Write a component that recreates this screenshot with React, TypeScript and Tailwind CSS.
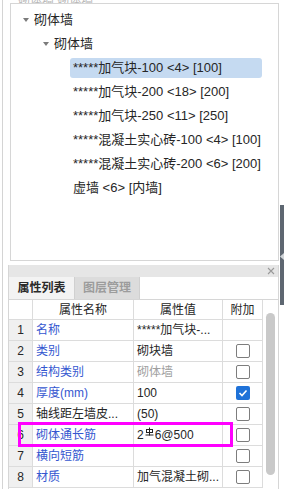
import React from "react"

const treeItems = [
  "*****加气块-100 <4> [100]",
  "*****加气块-200 <18> [200]",
  "*****加气块-250 <11> [250]",
  "*****混凝土实心砖-100 <4> [100]",
  "*****混凝土实心砖-200 <6> [200]",
  "虚墙 <6> [内墙]",
]

type Row = { name: string; value: React.ReactNode; blue?: boolean; grayValue?: boolean; box?: "none" | "off" | "on" }

const rows: Row[] = [
  { name: "名称", value: "*****加气块-...", blue: true, box: "none" },
  { name: "类别", value: "砌块墙", blue: true, box: "off" },
  { name: "结构类别", value: "砌体墙", blue: true, grayValue: true, box: "off" },
  { name: "厚度(mm)", value: "100", blue: true, box: "on" },
  { name: "轴线距左墙皮...", value: "(50)", box: "off" },
  { name: "砌体通长筋", value: <RebarValue />, blue: true, box: "off" },
  { name: "横向短筋", value: "", blue: true, box: "off" },
  { name: "材质", value: "加气混凝土砌...", blue: true, box: "off" },
]

function RebarValue() {
  return (
    <span className="inline-flex items-baseline">
      2
      <svg width="9" height="9" viewBox="0 0 9 9" className="mx-[1px] -translate-y-[3px]">
        <line x1="4.5" y1="0.5" x2="4.5" y2="8.5" stroke="#222" strokeWidth="1" />
        <rect x="1.5" y="2.5" width="6" height="3" fill="none" stroke="#222" strokeWidth="1" />
        <line x1="0.5" y1="8" x2="8.5" y2="8" stroke="#222" strokeWidth="1" />
      </svg>
      6@500
    </span>
  )
}

function Caret() {
  return (
    <svg width="6" height="4" viewBox="0 0 6 4" className="shrink-0">
      <polygon points="0,0 6,0 3,4" fill="#7b7b7b" />
    </svg>
  )
}

function Checkbox({ on }: { on?: boolean }) {
  if (on) {
    return (
      <div className="flex h-[14px] w-[14px] items-center justify-center rounded-[2px] bg-[#1f72d8]">
        <svg width="10" height="10" viewBox="0 0 10 10">
          <polyline points="1.5,5 4,7.5 8.5,2.5" fill="none" stroke="#fff" strokeWidth="1.6" />
        </svg>
      </div>
    )
  }
  return <div className="h-[14px] w-[14px] rounded-[2px] border border-[#7d7d7d] bg-white" />
}

export default function App() {
  return (
    <div
      className="relative h-[489px] w-[284px] overflow-hidden bg-white pl-[2px] text-[#262626]"
      style={{ fontFamily: '"Liberation Sans", "Noto Sans CJK SC", sans-serif' }}
    >
      <div className="flex h-full flex-col border-l border-[#d4d4d4] pl-[5px] pr-[5px]">
        {/* bottom edge of the combo above */}
        <div className="ml-[2px] h-[3px] overflow-hidden">
          <div className="-mt-[9px] pl-[8px] text-[12px] text-[#b8b8b8]">砌体墙 砌体墙</div>
        </div>

        {/* tree */}
        <div className="ml-[2px] h-[258px] border border-[#d6d6d6] pt-[4px] text-[13px]">
          <div className="flex h-6 items-center gap-[5px] pl-[12px]">
            <Caret />
            <span>砌体墙</span>
          </div>
          <div className="flex h-6 items-center gap-[5px] pl-[32px]">
            <Caret />
            <span>砌体墙</span>
          </div>
          {treeItems.map((t, i) => (
            <div key={t} className="flex h-6 items-center pl-[59px] pr-[16px]">
              <div
                className={`flex h-[20px] flex-1 items-center whitespace-pre rounded-[3px] pl-[3px] ${
                  i === 0 ? "bg-[#c5daf1]" : ""
                }`}
              >
                {t}
              </div>
            </div>
          ))}
        </div>

        <div className="h-[4px]" />

        {/* property panel */}
        <div className="flex flex-1 flex-col border-x border-[#d6d6d6] text-[12px]">
          <div className="flex h-[12px] items-center justify-end bg-[#e6e6e6] pr-[3px]">
            <svg width="8" height="8" viewBox="0 0 8 8">
              <path d="M1 1L7 7M7 1L1 7" stroke="#9a9a9a" strokeWidth="1.1" />
            </svg>
          </div>
          <div className="flex h-[23px] border-b border-[#d6d6d6]">
            <div className="flex w-[65px] items-center justify-center bg-[#f3f3f3] font-bold text-[#2a2a2a]">
              属性列表
            </div>
            <div className="flex w-[66px] items-center justify-center border-x border-[#d0d0d0] bg-[#dcdcdc] font-bold text-[#9c9c9c]">
              图层管理
            </div>
          </div>

          <div className="flex flex-1">
            <div className="w-[254px]">
              <div className="flex h-[20px] border-b border-[#dcdcdc]">
                <div className="w-[24px] border-r border-[#dcdcdc]" />
                <div className="flex w-[101px] items-center justify-center border-r border-[#dcdcdc]">属性名称</div>
                <div className="flex w-[89px] items-center justify-center border-r border-[#dcdcdc]">属性值</div>
                <div className="flex w-[40px] items-center justify-center border-r border-[#dcdcdc]">附加</div>
              </div>
              {rows.map((r, i) => (
                <div key={i} className="flex h-[21px] border-b border-[#dcdcdc]">
                  <div className="flex w-[24px] items-center justify-center border-r border-[#dcdcdc] bg-[#f0f0f0]">
                    {i + 1}
                  </div>
                  <div
                    className={`flex w-[101px] items-center border-r border-[#dcdcdc] pl-[3px] ${
                      r.blue ? "text-[#3557d0]" : ""
                    }`}
                  >
                    {r.name}
                  </div>
                  <div
                    className={`flex w-[89px] items-center border-r border-[#dcdcdc] pl-[3px] ${
                      r.grayValue ? "text-[#a0a0a0]" : ""
                    }`}
                  >
                    {r.value}
                  </div>
                  <div className="flex w-[40px] items-center justify-center border-r border-[#dcdcdc]">
                    {r.box !== "none" && <Checkbox on={r.box === "on"} />}
                  </div>
                </div>
              ))}
            </div>
            <div className="flex flex-1 justify-center pt-[13px]">
              <div className="h-[162px] w-[9px] rounded-full bg-[#c9c9c9]" />
            </div>
          </div>
        </div>
      </div>

      {/* splitter handle on right edge */}
      <div className="absolute right-0 top-[205px] flex h-[100px] w-[4px] items-start justify-center bg-[#5e6771] pt-[48px]">
        <svg width="4" height="7" viewBox="0 0 4 7">
          <polygon points="4,0 0,3.5 4,7" fill="#cfd3d7" />
        </svg>
      </div>

      {/* highlight box */}
      <div className="absolute left-[18px] top-[422px] h-[25px] w-[215px] border-[3px] border-[#ff00ff]" />
    </div>
  )
}
